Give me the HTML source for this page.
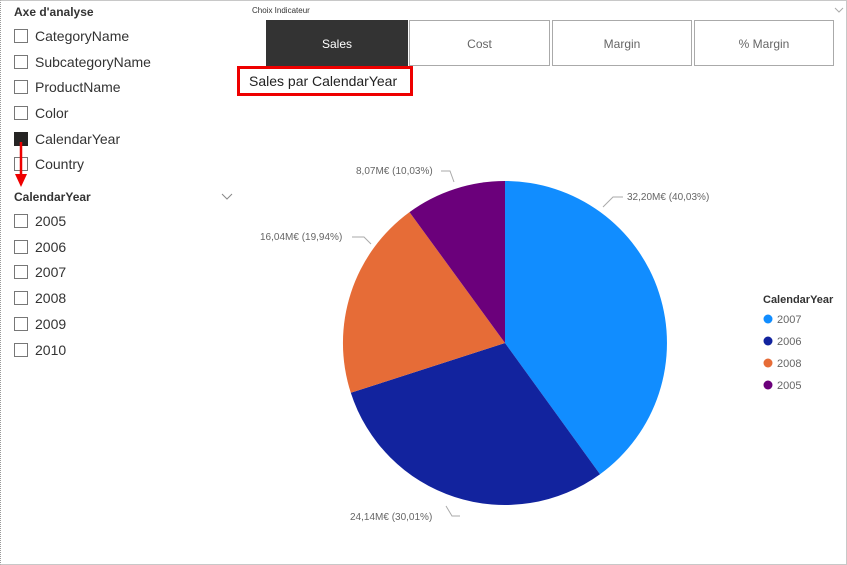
<!DOCTYPE html>
<html><head><meta charset="utf-8"><style>
body{margin:0;width:847px;height:565px;background:#fff;font-family:"Liberation Sans","DejaVu Sans",sans-serif;position:relative;overflow:hidden;color:#252423}
.frame{position:absolute;left:0;top:0;width:845px;height:563px;border:1px solid #c8c8c8;border-left:1px dotted #999}
.t{position:absolute;white-space:nowrap}
.cb{position:absolute;width:12px;height:12px;border:1px solid #777;background:#fff}
.item{position:absolute;left:35px;font-size:14px;color:#333}
.btn{position:absolute;top:20px;height:46px;border:1px solid #aaa;box-sizing:border-box;font-size:12px;color:#666;text-align:center;line-height:46px;background:#fff}
.lbl{font-size:10px;fill:#666;font-family:"Liberation Sans",sans-serif}
</style></head><body>
<div class="frame"></div>
<div class="t" style="left:14px;top:5px;font-size:12px;font-weight:bold;color:#333">Axe d'analyse</div>
<div class="cb" style="left:14px;top:29px"></div><div class="item t" style="top:28px">CategoryName</div>
<div class="cb" style="left:14px;top:55px"></div><div class="item t" style="top:54px">SubcategoryName</div>
<div class="cb" style="left:14px;top:80px"></div><div class="item t" style="top:79px">ProductName</div>
<div class="cb" style="left:14px;top:106px"></div><div class="item t" style="top:105px">Color</div>
<div class="cb" style="left:14px;top:132px;background:#252423;border-color:#252423"></div><div class="item t" style="top:131px">CalendarYear</div>
<div class="cb" style="left:14px;top:157px"></div><div class="item t" style="top:156px">Country</div>
<svg style="position:absolute;left:14px;top:140px" width="14" height="50"><line x1="7" y1="2" x2="7" y2="36" stroke="#e00" stroke-width="2.5"/><polygon points="1,34 13,34 7,47" fill="#e00"/></svg>
<div class="t" style="left:14px;top:190px;font-size:12px;font-weight:bold;color:#333">CalendarYear</div>
<svg style="position:absolute;left:221px;top:193px" width="12" height="8"><polyline points="1,1 6,6 11,1" fill="none" stroke="#888"/></svg>
<div class="cb" style="left:14px;top:214px"></div><div class="item t" style="top:213px">2005</div>
<div class="cb" style="left:14px;top:240px"></div><div class="item t" style="top:239px">2006</div>
<div class="cb" style="left:14px;top:265px"></div><div class="item t" style="top:264px">2007</div>
<div class="cb" style="left:14px;top:291px"></div><div class="item t" style="top:290px">2008</div>
<div class="cb" style="left:14px;top:317px"></div><div class="item t" style="top:316px">2009</div>
<div class="cb" style="left:14px;top:343px"></div><div class="item t" style="top:342px">2010</div>

<div class="t" style="left:252px;top:6px;font-size:8px;color:#333">Choix Indicateur</div>
<svg style="position:absolute;left:834px;top:7px" width="10" height="6"><polyline points="1,1 5,5 9,1" fill="none" stroke="#aaa"/></svg>
<div class="btn" style="left:266px;width:142px;background:#333;border-color:#333;color:#fff">Sales</div>
<div class="btn" style="left:409px;width:141px">Cost</div>
<div class="btn" style="left:552px;width:140px">Margin</div>
<div class="btn" style="left:694px;width:140px">% Margin</div>
<div class="t" style="left:237px;top:66px;width:176px;height:30px;border:3px solid #e00;box-sizing:border-box;font-size:14px;line-height:24px;padding-left:9px;color:#222">Sales par CalendarYear</div>

<svg style="position:absolute;left:0;top:0" width="847" height="565">
<path d="M505,181 A162,162 0 0 1 600,474.2 L505,343Z" fill="#118DFF"/>
<path d="M600,474.2 A162,162 0 0 1 350.8,392.8 L505,343Z" fill="#12239E"/>
<path d="M350.8,392.8 A162,162 0 0 1 409.5,212.1 L505,343Z" fill="#E66C37"/>
<path d="M409.5,212.1 A162,162 0 0 1 505,181 L505,343Z" fill="#6B007B"/>
<g fill="none" stroke="#aaa"><polyline points="603,207 613,197 623,197"/><polyline points="454,182 450,171 441,171"/><polyline points="371,244 364,237 352,237"/><polyline points="446,506 452,516 460,516"/></g>
<text class="lbl" x="627" y="200">32,20M€ (40,03%)</text>
<text class="lbl" x="356" y="174">8,07M€ (10,03%)</text>
<text class="lbl" x="260" y="240">16,04M€ (19,94%)</text>
<text class="lbl" x="350" y="520">24,14M€ (30,01%)</text>
<text x="763" y="303" style="font-size:11px;font-weight:bold;fill:#333;font-family:'Liberation Sans',sans-serif">CalendarYear</text>
<circle cx="768" cy="319" r="4.5" fill="#118DFF"/><text class="lbl" style="font-size:11px" x="777" y="323">2007</text>
<circle cx="768" cy="341" r="4.5" fill="#12239E"/><text class="lbl" style="font-size:11px" x="777" y="345">2006</text>
<circle cx="768" cy="363" r="4.5" fill="#E66C37"/><text class="lbl" style="font-size:11px" x="777" y="367">2008</text>
<circle cx="768" cy="385" r="4.5" fill="#6B007B"/><text class="lbl" style="font-size:11px" x="777" y="389">2005</text>
</svg>
</body></html>
